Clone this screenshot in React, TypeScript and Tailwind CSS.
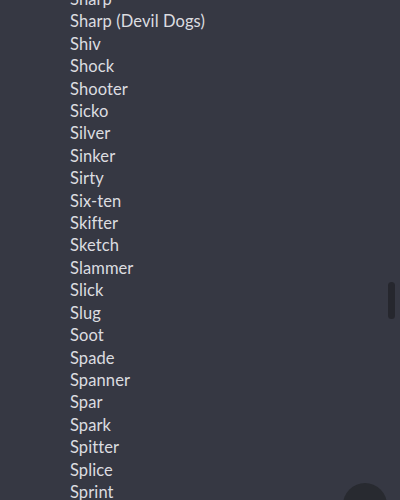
import React from 'react';

const names = [
  'Sharp',
  'Sharp (Devil Dogs)',
  'Shiv',
  'Shock',
  'Shooter',
  'Sicko',
  'Silver',
  'Sinker',
  'Sirty',
  'Six-ten',
  'Skifter',
  'Sketch',
  'Slammer',
  'Slick',
  'Slug',
  'Soot',
  'Spade',
  'Spanner',
  'Spar',
  'Spark',
  'Spitter',
  'Splice',
  'Sprint',
];

export default function App() {
  return (
    <div className="relative w-[400px] h-[500px] overflow-hidden bg-[#363843] font-['Lato',sans-serif]">
      {/* scrolled list */}
      <ul className="-mt-[12px] pl-[70px] text-[16.5px] leading-[22.4px] tracking-[0.1px] text-[#dcdde0]">
        {names.map((n) => (
          <li key={n}>{n}</li>
        ))}
      </ul>

      {/* scrollbar thumb */}
      <div className="absolute right-[5px] top-[282px] w-[7px] h-[37px] rounded-full bg-[#26272e]" />

      {/* floating button, mostly off screen */}
      <div className="absolute left-[343px] top-[483px] w-[44px] h-[44px] rounded-full bg-[#282a30]" />
    </div>
  );
}
